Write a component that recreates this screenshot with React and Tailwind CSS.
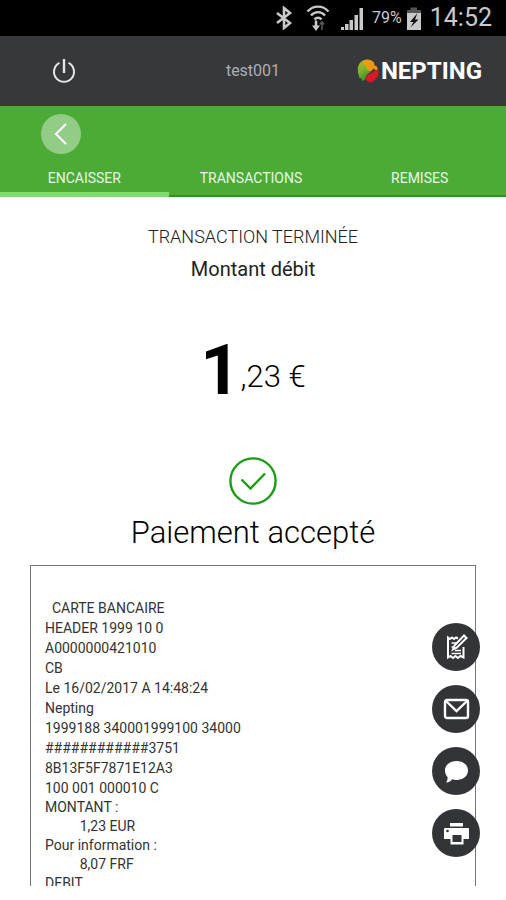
import { useState } from 'react';
import clsx from 'clsx';

const TABS = ['ENCAISSER', 'TRANSACTIONS', 'REMISES'];

const TICKET_HEADER = [
  '  CARTE BANCAIRE',
  'HEADER 1999 10 0',
  'A0000000421010',
  'CB',
  'Le 16/02/2017 A 14:48:24',
  'Nepting',
  '1999188 340001999100 34000',
  '############3751',
  '8B13F5F7871E12A3',
  '100 001 000010 C',
];

const TICKET_AMOUNTS = [
  'MONTANT :',
  '          1,23 EUR',
  'Pour information :',
  '          8,07 FRF',
  'DEBIT',
];

function StatusBar() {
  return (
    <div className="flex h-9 shrink-0 items-center justify-end bg-black pr-[14px] text-[#c9c9c9]">
      {/* Bluetooth */}
      <svg className="mr-3 h-6 w-5" viewBox="0 0 20 24" fill="none" stroke="currentColor" strokeWidth="2.6">
        <path d="M3 7l13 10-6 5V2l6 5L3 17" />
      </svg>
      {/* Wifi with data arrows */}
      <svg className="mr-[10px] h-7 w-6" viewBox="0 0 24 28" fill="none" stroke="currentColor" strokeWidth="2.4">
        <path d="M1.500 7.500C7.500 1 16.500 1 22.500 7.500M5 11.500c4-4.500 10-4.500 14 0M8.500 15.500c2-2.300 5-2.300 7 0" />
        <path d="M10 16.500v8" strokeWidth="2.600" />
        <path d="M6 21.500h8L10 27z" fill="currentColor" stroke="none" />
        <path d="M16 26v-7M13.800 20.500L16 18l2.200 2.500" stroke="#555" strokeWidth="1.600" />
      </svg>
      {/* Signal */}
      <svg className="mr-2 h-[23px] w-6" viewBox="0 0 24 23" fill="currentColor">
        <path d="M1 20h3v3H1zM5 17h3.500v6H5zM9.500 13h3.500v10H9.500zM14.500 8h3.500v15h-3.500zM19.500 1H23v22h-3.500z" />
      </svg>
      <span className="mr-1 text-[16px] leading-9">79%</span>
      <svg className="mr-2 h-[23px] w-4" viewBox="0 0 16 23">
        <path d="M4.500 0.500h6.500V3H15v4H1V3h3.500z" fill="#555" />
        <path d="M1 6h14v17H1z" fill="currentColor" />
        <path d="M11.500 6L4 15h3.500L4.500 20.500 12.500 12.500H9z" fill="#111" />
      </svg>
      <span className="text-[25px] leading-9">14:52</span>
    </div>
  );
}

function NeptingLogo() {
  return (
    <div className="flex items-center">
      <svg className="h-6 w-[22px]" viewBox="0 0 22 24">
        <defs>
          <linearGradient id="leaf" x1="0" y1="0" x2="0.4" y2="1">
            <stop offset="0" stopColor="#b9b51c" />
            <stop offset="0.500" stopColor="#7cb52c" />
            <stop offset="1" stopColor="#3f8f2a" />
          </linearGradient>
          <linearGradient id="sun" x1="0" y1="0" x2="1" y2="1">
            <stop offset="0" stopColor="#e8a414" />
            <stop offset="1" stopColor="#f08a1c" />
          </linearGradient>
        </defs>
        <path d="M7 1C2 3 0 8 1 13c0 2.500 1.500 3.500 1 5.500l2.500 1 .5 3 3-2 1.500-4.500 4-3-1-5-1-6z" fill="url(#leaf)" />
        <path d="M6 2C9-.5 14 0 17 3.500l.5 3 2 .5 1.500 3-2 1.500-2.500-2-2.500 3-4-1.500L9 7 6 5z" fill="url(#sun)" />
        <path d="M8 19l3-3.500 3.500-1 2.500-2.500 4.500-1c.5 5-1.500 9-5.500 11.500-3 1.500-6 .5-8-3.500z" fill="#d9182a" />
      </svg>
      <span className="ml-[2px] text-[24px] leading-6 font-bold text-white">NEPTING</span>
    </div>
  );
}

function TopBar() {
  return (
    <header className="grid h-[70px] shrink-0 grid-cols-3 items-center bg-[#37383c] text-white">
      <button type="button" aria-label="Déconnexion" className="ml-[52px] w-6">
        <svg className="size-6" viewBox="0 0 24 24" fill="none" stroke="#e4e4e4" strokeWidth="2">
          <path d="M7.500 3.900a10 10 0 1 0 9 0" />
          <path d="M12 0v14" strokeWidth="2.400" />
        </svg>
      </button>
      <span className="text-center text-[16px] text-[#aeaeb0]">test001</span>
      <div className="flex justify-end pr-6">
        <NeptingLogo />
      </div>
    </header>
  );
}

function NavBar({ active, onSelect }) {
  return (
    <nav className="h-[91px] shrink-0 border-b-2 border-[#1f9c1c] bg-[#4bab36]">
      <button
        type="button"
        aria-label="Retour"
        className="mt-2 ml-[41px] flex size-10 items-center justify-center rounded-full bg-[#93cc86]"
      >
        <svg className="size-6" viewBox="0 0 24 24" fill="none" stroke="#fff" strokeWidth="2">
          <path d="M17 2L7 12l10 10" />
        </svg>
      </button>
      <div className="grid h-[43px] grid-cols-3">
        {TABS.map((tab) => (
          <button
            key={tab}
            type="button"
            onClick={() => onSelect(tab)}
            className={clsx(
              'border-b-[5px] pt-[10px] text-[14px] text-[#e9f6e6]',
              tab === active ? 'border-[#80dc6c]' : 'border-transparent pr-1'
            )}
          >
            {tab}
          </button>
        ))}
      </div>
    </nav>
  );
}

function RoundButton({ label, children }) {
  return (
    <button
      type="button"
      aria-label={label}
      className="flex size-12 items-center justify-center rounded-full bg-[#333438] text-white"
    >
      {children}
    </button>
  );
}

function ShareButtons() {
  return (
    <div className="absolute top-[58px] right-[-4px] flex flex-col gap-[14px]">
      <RoundButton label="Signer">
        <svg className="size-7" viewBox="0 0 28 28" fill="none" stroke="currentColor" strokeWidth="2">
          <path d="M16 5.500L14 4.500 12 6 10 4.500 8 6 6 4.500v20l2.500-1.500 2.500 2 2.500-2 2.500 2 2.500-2 3 1.500V14" />
          <path d="M9.500 10h5M9.500 14h2M13 17.500h6M9.500 20.500h9.500" strokeWidth="1.500" />
          <path d="M22 2.500l2.500 2.500-9.500 9.500-4 2 1.500-4z" />
        </svg>
      </RoundButton>
      <RoundButton label="Envoyer par e-mail">
        <svg className="size-7" viewBox="0 0 28 28" fill="none" stroke="currentColor" strokeWidth="2.400">
          <rect x="3" y="5" width="23" height="18" rx="2" />
          <path d="M4 6l10.500 10L25 6" />
        </svg>
      </RoundButton>
      <RoundButton label="Envoyer par SMS">
        <svg className="size-7" viewBox="0 0 28 28" fill="currentColor">
          <path d="M14.500 4C21 4 26 8 26 13.500S21 23 14.500 23c-1.500 0-3-.3-4.300-.7C8.500 24.500 6.500 25.500 4 25.500c1.200-1.500 1.800-3.500 1.500-5.500C3.800 18.300 3 16 3 13.500 3 8 8 4 14.500 4z" />
        </svg>
      </RoundButton>
      <RoundButton label="Imprimer">
        <svg className="size-7" viewBox="0 0 28 28">
          <path
            d="M8 4h13v3.500H8zM3 9h23q1 0 1 1v10h-5.500v5.500h-13V20H2V10q0-1 1-1z"
            fill="currentColor"
          />
          <path d="M10.500 16h9v7h-9z" fill="#333438" />
          <circle cx="5.500" cy="12" r="1.300" fill="#333438" />
        </svg>
      </RoundButton>
    </div>
  );
}

function Ticket() {
  return (
    <section className="relative mx-[30px] mt-3 mb-[14px] flex min-h-0 flex-1 flex-col">
      <div className="min-h-0 flex-1 overflow-hidden border-[1px] border-b-0 border-[#777] px-[14px] pt-8 text-[14px] whitespace-pre text-[#333]">
        {TICKET_HEADER.map((line) => (
          <p key={line} className="leading-5">{line}</p>
        ))}
        {TICKET_AMOUNTS.map((line) => (
          <p key={line} className="leading-[19px]">{line}</p>
        ))}
      </div>
      <ShareButtons />
    </section>
  );
}

export default function App() {
  const [tab, setTab] = useState('ENCAISSER');

  return (
    <div className="flex h-screen flex-col overflow-hidden bg-white font-['Roboto',sans-serif]">
      <StatusBar />
      <TopBar />
      <NavBar active={tab} onSelect={setTab} />

      <main className="flex min-h-0 flex-1 flex-col">
        <div className="pt-6 text-center text-[#222]">
          <h1 className="text-[18px] leading-8 font-light">TRANSACTION TERMINÉE</h1>
          <p className="text-[20px] leading-8">Montant débit</p>
        </div>

        <div className="mt-[50px] flex items-end justify-center text-black">
          <span className="text-[70px] leading-[70px] font-bold">1</span>
          <span className="text-[31px] leading-14 font-light">,23 €</span>
        </div>

        <div className="mt-[52px] flex flex-col items-center">
          <svg className="size-12" viewBox="0 0 48 48" fill="none" stroke="#1a9d13" strokeWidth="2.400">
            <circle cx="24" cy="24" r="22.600" />
            <path d="M12.500 22.500l9 9L36 16.500" />
          </svg>
          <p className="mt-2 text-[31px] leading-10 font-light text-black">Paiement accepté</p>
        </div>

        <Ticket />
      </main>
    </div>
  );
}
